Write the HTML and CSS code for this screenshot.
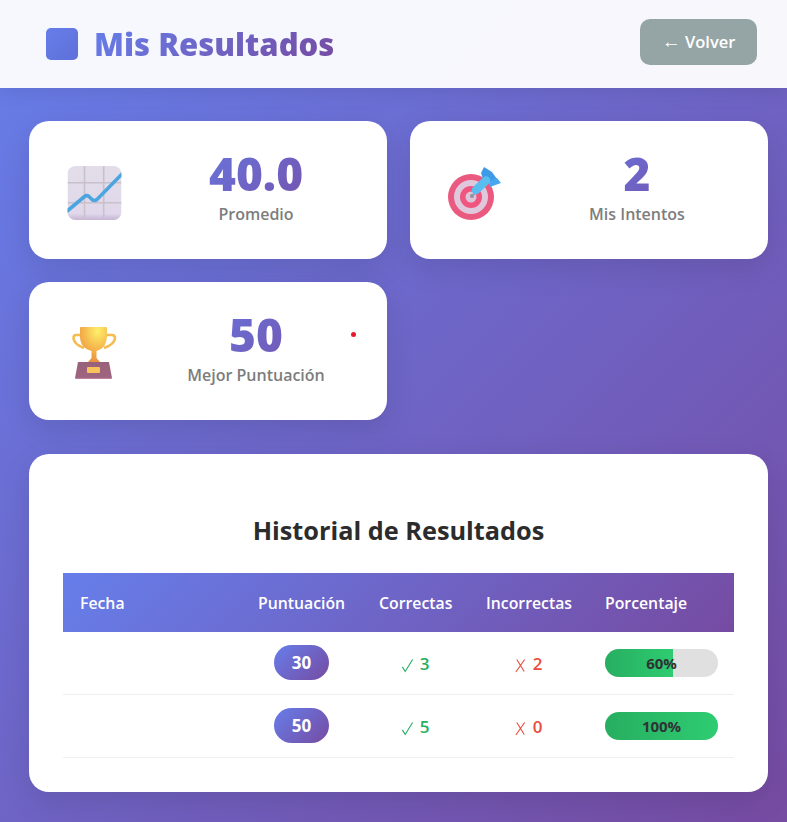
FILE: index.html
```html
<!DOCTYPE html>
<html lang="es">
<head>
    <meta charset="UTF-8">
    <meta name="viewport" content="width=device-width, initial-scale=1.0">
    <title>Mis Resultados</title>
    <link rel="stylesheet" href="styles.css">
</head>
<body>
    <header class="header">
        <div class="brand">
            <span class="brand-icon"></span>
            <h1>Mis Resultados</h1>
        </div>
        <a class="back-button" href="#"><span class="arrow">←</span> Volver</a>
    </header>

    <main class="content">
        <section class="stats">
            <div class="stat-card">
                <svg class="stat-icon" viewBox="0 0 64 64">
                    <defs>
                        <linearGradient id="paper" x1="0" y1="0" x2="0" y2="1">
                            <stop offset="0" stop-color="#e3dde9"/>
                            <stop offset="0.88" stop-color="#e0d8ea"/>
                            <stop offset="1" stop-color="#c6b4d6"/>
                        </linearGradient>
                        <clipPath id="paperClip">
                            <rect x="4.500" y="6" width="54" height="54" rx="8"/>
                        </clipPath>
                    </defs>
                    <g clip-path="url(#paperClip)">
                        <rect x="4.500" y="6" width="54" height="54" fill="url(#paper)"/>
                        <path d="M21.500 6V60M40.700 6V60M4.500 22.700H58.500M4.500 42.700H58.500" stroke="#c9c0cc" stroke-width="1.600" fill="none"/>
                        <path d="M3 52L21.500 36.500Q23.700 34.800 26 36.500L29 39.500Q31.500 41.500 34 39.500L60 13" stroke="#4ba6e0" stroke-width="3.600" fill="none"/>
                    </g>
                </svg>
                <div class="stat-text">
                    <div class="stat-value">40.0</div>
                    <div class="stat-label">Promedio</div>
                </div>
            </div>
            <div class="stat-card">
                <svg class="stat-icon" viewBox="0 0 64 64">
                    <circle cx="27" cy="37" r="23" fill="#ea5a80"/>
                    <circle cx="27" cy="37" r="17" fill="#e0c8dc"/>
                    <circle cx="27" cy="37" r="11" fill="#f0557f"/>
                    <circle cx="27" cy="37" r="5.500" fill="#dcc4d8"/>
                    <circle cx="28" cy="36" r="2" fill="#9a8a9c"/>
                    <path d="M28 36L33 31" stroke="#8c9cb0" stroke-width="1.800"/>
                    <path d="M37 13L40 7L48 12L53 19L46 22L39 19Z" fill="#3f9be8"/>
                    <path d="M45 22L53 18L57 23L46 27Z" fill="#4aa6ee"/>
                    <path d="M32 30L42 20.500" stroke="#58bdf0" stroke-width="8.500" stroke-linecap="round"/>
                </svg>
                <div class="stat-text">
                    <div class="stat-value">2</div>
                    <div class="stat-label">Mis Intentos</div>
                </div>
            </div>
            <div class="stat-card">
                <svg class="stat-icon" viewBox="0 0 64 64">
                    <defs>
                        <radialGradient id="gold" cx="0.65" cy="0.12" r="0.9">
                            <stop offset="0" stop-color="#fff06a"/>
                            <stop offset="0.55" stop-color="#f5b84e"/>
                            <stop offset="1" stop-color="#ea9040"/>
                        </radialGradient>
                        <linearGradient id="plinth" x1="0" y1="0" x2="0" y2="1">
                            <stop offset="0" stop-color="#98617a"/>
                            <stop offset="0.9" stop-color="#9f6480"/>
                            <stop offset="1" stop-color="#c888a8"/>
                        </linearGradient>
                    </defs>
                    <path d="M18 14H13Q10.500 14 10.500 17Q10.500 23 21 27M43 14H49Q52 14 52 17Q52 23 41 27" stroke="#f5bc50" stroke-width="2.600" fill="none"/>
                    <path d="M17 7Q17 6 18 6H43Q44 6 44 7V15Q44 27 33.500 30V37L37 41H25L28.500 37V30Q17 27 17 15Z" fill="url(#gold)"/>
                    <path d="M15 41H46L49 57Q49 58 48 58H13Q12 58 12 57Z" fill="url(#plinth)"/>
                    <rect x="24" y="46" width="13" height="6" rx="1" fill="#f9c35c"/>
                </svg>
                <div class="stat-text">
                    <div class="stat-value">50</div>
                    <div class="stat-label">Mejor Puntuación</div>
                </div>
                <span class="red-dot"></span>
            </div>
        </section>

        <section class="history">
            <h2>Historial de Resultados</h2>
            <table class="results">
                <thead>
                    <tr>
                        <th class="col-date">Fecha</th>
                        <th class="col-score">Puntuación</th>
                        <th class="col-ok">Correctas</th>
                        <th class="col-bad">Incorrectas</th>
                        <th class="col-pct">Porcentaje</th>
                    </tr>
                </thead>
                <tbody>
                    <tr>
                        <td></td>
                        <td class="center"><span class="score-badge">30</span></td>
                        <td class="center ok">
                            <svg class="mark" viewBox="0 0 14 16"><path d="M1.500 9.500L4.500 14.500L12.500 1.500"/></svg> 3
                        </td>
                        <td class="center bad">
                            <svg class="mark" viewBox="0 0 14 16"><path d="M3 1.500L11 14.500M11.500 1.500L2 15"/></svg> 2
                        </td>
                        <td class="pct-cell">
                            <div class="progress">
                                <div class="progress-fill" style="width: 60%"></div>
                                <span class="progress-text">60%</span>
                            </div>
                        </td>
                    </tr>
                    <tr>
                        <td></td>
                        <td class="center"><span class="score-badge">50</span></td>
                        <td class="center ok">
                            <svg class="mark" viewBox="0 0 14 16"><path d="M1.500 9.500L4.500 14.500L12.500 1.500"/></svg> 5
                        </td>
                        <td class="center bad">
                            <svg class="mark" viewBox="0 0 14 16"><path d="M3 1.500L11 14.500M11.500 1.500L2 15"/></svg> 0
                        </td>
                        <td class="pct-cell">
                            <div class="progress">
                                <div class="progress-fill" style="width: 100%"></div>
                                <span class="progress-text">100%</span>
                            </div>
                        </td>
                    </tr>
                </tbody>
            </table>
        </section>
    </main>
</body>
</html>
```

FILE: styles.css
```css
* {
    box-sizing: border-box;
}

body {
    font-family: "Open Sans", "Noto Sans", Arial, sans-serif;
    margin: 0;
    min-height: 822px;
    background: linear-gradient(135deg, #667eea 0%, #764ba2 100%);
    color: #2c3e50;
}

.header {
    display: flex;
    justify-content: space-between;
    align-items: center;
    height: 88px;
    padding: 0 30px 0 46px;
    background-color: rgba(255, 255, 255, 0.95);
    box-shadow: 0 2px 20px rgba(0, 0, 0, 0.1);
}

.brand {
    display: flex;
    align-items: center;
    gap: 16px;
}

.brand-icon {
    width: 32px;
    height: 32px;
    border-radius: 5px;
    background: linear-gradient(135deg, #667eea, #5f70d8);
}

.brand h1 {
    margin: 0;
    font-size: 31px;
    font-weight: 800;
    line-height: 40px;
    background: linear-gradient(135deg, #667eea, #764ba2);
    -webkit-background-clip: text;
    background-clip: text;
    color: transparent;
}

.back-button {
    display: block;
    width: 117px;
    height: 46px;
    margin-bottom: 4px;
    line-height: 46px;
    text-align: center;
    font-size: 16.500px;
    font-weight: 600;
    color: white;
    text-decoration: none;
    background-color: #95a5a6;
    border-radius: 10px;
}

.arrow {
    font-family: "Liberation Sans", Arial, sans-serif;
    font-size: 19px;
    font-weight: 400;
    line-height: 20px;
}

.content {
    padding: 33px 19px 30px 29px;
}

.stats {
    display: grid;
    grid-template-columns: 358px 358px;
    gap: 23px;
    margin-bottom: 34px;
}

.stat-card {
    position: relative;
    display: flex;
    align-items: center;
    gap: 32px;
    height: 138px;
    padding: 0 34px;
    background-color: white;
    border-radius: 20px;
    box-shadow: 0 10px 30px rgba(0, 0, 0, 0.1);
}

.stat-icon {
    flex: none;
    width: 64px;
    height: 64px;
    margin-top: 4px;
}

.stat-text {
    flex: 1;
    margin-bottom: 8px;
    text-align: center;
}

.stat-value {
    margin-bottom: 2px;
    font-size: 46px;
    font-weight: 800;
    line-height: 54px;
    background: linear-gradient(135deg, #667eea, #764ba2);
    -webkit-background-clip: text;
    background-clip: text;
    color: transparent;
}

.stat-label {
    font-size: 16px;
    font-weight: 600;
    line-height: 24px;
    color: #7d7d7d;
}

.red-dot {
    position: absolute;
    left: 322px;
    top: 50px;
    width: 5px;
    height: 5px;
    border-radius: 50%;
    background-color: #e8192c;
}

.history {
    height: 338px;
    width: 739px;
    padding: 58px 34px 0;
    background-color: white;
    border-radius: 20px;
    box-shadow: 0 10px 30px rgba(0, 0, 0, 0.1);
}

.history h2 {
    margin: 0 0 24px;
    font-size: 25.300px;
    font-weight: 700;
    line-height: 37px;
    text-align: center;
    color: #2c2c2c;
}

.results {
    width: 671px;
    table-layout: fixed;
    border-collapse: separate;
    border-spacing: 0;
}

.results th {
    height: 59px;
    padding: 0 17px;
    font-size: 15.800px;
    font-weight: 600;
    text-align: left;
    white-space: nowrap;
    color: white;
}

.results thead tr {
    background: linear-gradient(135deg, #667eea, #764ba2);
}

.col-date { width: 178px; }
.col-score { width: 121px; }
.col-ok { width: 107px; }
.col-bad { width: 119px; }
.col-pct { width: 146px; }

.results td {
    height: 63px;
    padding: 0 16px;
    font-size: 17px;
    font-weight: 600;
    border-bottom: 1px solid #ecf0f1;
}

.results .pct-cell {
    padding-left: 17px;
}

.results .center {
    text-align: center;
}

.score-badge {
    display: inline-block;
    width: 55px;
    height: 35px;
    margin-bottom: 2px;
    line-height: 35px;
    border-radius: 18px;
    font-size: 17px;
    font-weight: 700;
    text-align: center;
    vertical-align: middle;
    color: white;
    background: linear-gradient(135deg, #667eea, #764ba2);
}

.ok {
    color: #27ae60;
}

.bad {
    color: #e74c3c;
}

.mark {
    width: 13px;
    height: 15px;
    margin-right: 1px;
    vertical-align: -3px;
    fill: none;
    stroke: currentColor;
    stroke-width: 1.2;
}

.progress {
    position: relative;
    width: 113px;
    height: 28px;
    border-radius: 14px;
    overflow: hidden;
    background-color: #e0e0e0;
}

.progress-fill {
    height: 100%;
    background: linear-gradient(90deg, #27ae60, #2ecc71);
}

.progress-text {
    position: absolute;
    top: 0;
    left: 0;
    width: 100%;
    line-height: 28px;
    text-align: center;
    font-size: 15px;
    font-weight: 700;
    color: #2f3336;
}
```
